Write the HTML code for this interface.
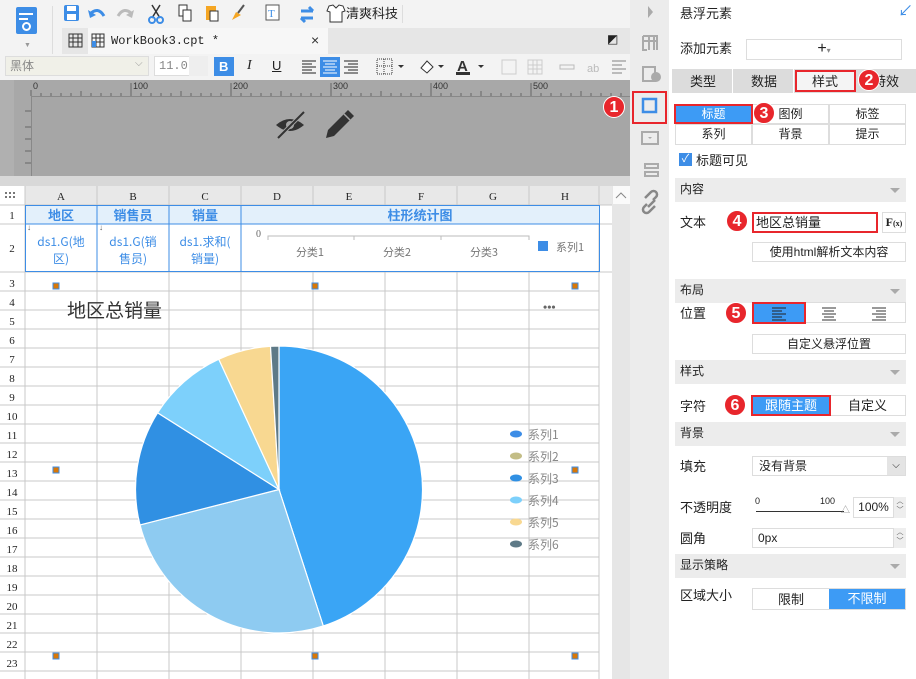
<!DOCTYPE html>
<html><head><meta charset="utf-8"><style>
*{margin:0;padding:0;box-sizing:border-box}
body{width:916px;height:679px;overflow:hidden;background:#fff;font-family:"Liberation Sans","Noto Sans CJK SC",sans-serif;font-size:12px;color:#222;position:relative}
.a{position:absolute}
.t{position:absolute;white-space:nowrap;line-height:1}
.badge{position:absolute;width:22px;height:22px;border-radius:50%;background:#e8262c;color:#fff;font-size:16px;font-weight:bold;text-align:center;line-height:22px;border:1px solid #fff}
.band{position:absolute;left:675px;width:231px;height:24px;background:#ececec}
.band span{position:absolute;left:5px;top:5px;font-size:12px;line-height:1}
.band i{position:absolute;right:6px;top:10px;border:5px solid transparent;border-top:5px solid #aaa}
.btn{position:absolute;background:#fff;border:1px solid #ddd;text-align:center;font-size:12px}
.lab{position:absolute;left:680px;font-size:12px;line-height:1;white-space:nowrap}
</style></head><body>

<!-- top toolbar -->
<div class="a" style="left:0;top:0;width:630px;height:28px;background:#f3f3f3"></div>
<div class="a" style="left:0;top:28px;width:62px;height:26px;background:#f3f3f3"></div>
<div class="a" style="left:16px;top:7px;width:21px;height:27px;background:#3d8de6;border-radius:2px"></div>
<div class="a" style="left:19px;top:13px;width:14px;height:2px;background:#fff"></div>
<div class="a" style="left:19px;top:18px;width:9px;height:2px;background:#fff"></div>
<div class="a" style="left:22px;top:22px;width:9px;height:9px;border:2px solid #fff;border-radius:50%"></div>
<div class="t" style="left:24px;top:42px;font-size:7px;color:#999">▼</div>
<div class="a" style="left:52px;top:6px;width:1px;height:50px;background:#ddd"></div>
<svg class="a" style="left:60px;top:2px" width="360" height="24">
<rect x="4" y="3" width="15" height="16" rx="2" fill="#3d8de6"/><rect x="7" y="4" width="9" height="5" fill="#fff"/><rect x="7" y="12" width="9" height="6" fill="#fff"/>
<path d="M30 12 q8 -8 14 2" stroke="#3d8de6" stroke-width="3" fill="none"/><path d="M28 8 l2 8 l6 -3z" fill="#3d8de6"/>
<path d="M72 12 q-8 -8 -14 2" stroke="#bbb" stroke-width="3" fill="none"/><path d="M74 8 l-2 8 l-6 -3z" fill="#bbb"/>
<path d="M92 3 l8 13 M100 3 l-8 13" stroke="#333" stroke-width="1.5"/><circle cx="92" cy="18" r="3" fill="none" stroke="#3d8de6" stroke-width="2"/><circle cx="100" cy="18" r="3" fill="none" stroke="#3d8de6" stroke-width="2"/>
<rect x="119" y="3" width="8" height="11" fill="#fff" stroke="#333"/><rect x="123" y="8" width="8" height="11" fill="#fff" stroke="#333"/>
<rect x="146" y="4" width="10" height="14" fill="#f5a623"/><rect x="150" y="9" width="8" height="10" fill="#fff" stroke="#333"/>
<path d="M172 18 l4 -8 l5 3 z" fill="#f5a623"/><path d="M178 11 l6 -8" stroke="#555" stroke-width="2"/>
<rect x="206" y="3" width="13" height="15" fill="#fff" stroke="#555"/><text x="208" y="15" font-size="11" fill="#3d8de6" font-family="Liberation Serif">T</text>
<path d="M241 9 h12 M249 5 l4 4 M253 16 h-12 M245 20 l-4 -4" stroke="#3d8de6" stroke-width="3" fill="none"/>
<path d="M269 4 l4 -1 l3 3 l3 -3 l4 1 l2 5 l-3 1 v10 h-12 v-10 l-3 -1z" fill="#fff" stroke="#333"/>
</svg>
<div class="t" style="left:346px;top:7px;font-size:13px">清爽科技</div>
<div class="a" style="left:402px;top:5px;width:1px;height:18px;background:#ddd"></div>
<!-- tab row -->
<div class="a" style="left:62px;top:28px;width:568px;height:26px;background:#e6e6e6"></div>
<div class="a" style="left:88px;top:28px;width:240px;height:26px;background:#f7f7f7"></div>
<svg class="a" style="left:68px;top:32px" width="40" height="18"><path d="M1 2h13v13H1zM1 6h13M1 10h13M5 2v13M10 2v13" stroke="#333" fill="none"/><path d="M24 2h12v13H24zM24 6h12M24 10h12M28 2v13M32 2v13" stroke="#333" fill="none"/><rect x="24" y="9" width="4" height="6" fill="#3d8de6"/></svg>
<div class="t" style="left:111px;top:35px;font-family:'Liberation Mono',monospace;font-size:12px">WorkBook3.cpt *</div>
<div class="t" style="left:311px;top:33px;font-size:14px;color:#333">×</div>
<div class="t" style="left:607px;top:33px;font-size:12px">◩</div>
<!-- format toolbar -->
<div class="a" style="left:0;top:54px;width:630px;height:26px;background:#f3f3f3"></div>
<div class="a" style="left:5px;top:56px;width:144px;height:20px;background:#f0f0e8;border:1px solid #ddd"></div>
<div class="t" style="left:10px;top:60px;color:#888">黑体</div>
<div class="t" style="left:135px;top:59px;color:#999;font-size:10px">⌵</div>
<div class="a" style="left:154px;top:56px;width:54px;height:20px;background:#fff;border:1px solid #ddd"></div>
<div class="t" style="left:159px;top:60px;color:#888;font-family:'Liberation Mono'">11.0</div>
<div class="a" style="left:189px;top:56px;width:19px;height:20px;background:#eee"></div>
<div class="a" style="left:214px;top:57px;width:20px;height:19px;background:#3d8de6"></div>
<div class="t" style="left:219px;top:60px;color:#fff;font-weight:bold;font-size:13px">B</div>
<div class="t" style="left:247px;top:59px;font-style:italic;font-family:'Liberation Serif';font-size:14px">I</div>
<div class="t" style="left:272px;top:59px;text-decoration:underline;font-size:13px">U</div>
<svg class="a" style="left:296px;top:56px" width="334" height="22">
<path d="M6 5h14M6 8h10M6 11h14M6 14h10M6 17h14" stroke="#222"/>
<rect x="24" y="1" width="20" height="20" fill="#3d8de6"/><path d="M27 5h14M29 8h10M27 11h14M29 14h10M27 17h14" stroke="#fff"/>
<path d="M48 5h14M52 8h10M48 11h14M52 14h10M48 17h14" stroke="#222"/>
<rect x="81" y="3" width="15" height="15" fill="none" stroke="#333" stroke-dasharray="1 1"/><path d="M81 10h15M88 3v15" stroke="#333" stroke-dasharray="1 1"/><path d="M102 9l3 3 3 -3z" fill="#333"/>
<path d="M125 12l6 -7 6 6 -6 6z" fill="#fff" stroke="#333"/><path d="M142 9l3 3 3 -3z" fill="#333"/>
<text x="161" y="15" font-size="15" font-weight="bold" fill="#333" font-family="Liberation Sans">A</text><rect x="160" y="16" width="14" height="3" fill="#333"/><path d="M182 9l3 3 3 -3z" fill="#333"/>
<rect x="206" y="4" width="14" height="14" fill="none" stroke="#ccc"/><rect x="232" y="4" width="14" height="14" fill="none" stroke="#ccc"/><path d="M232 9h14M232 13h14M237 4v14M241 4v14" stroke="#ccc"/>
<rect x="264" y="9" width="14" height="4" fill="none" stroke="#bbb"/><text x="291" y="16" font-size="11" fill="#bbb">ab</text>
<path d="M316 5h14M316 9h10M316 13h14M316 17h10" stroke="#bbb" stroke-width="2"/>
</svg>
<!-- ruler area -->
<div class="a" style="left:0;top:80px;width:630px;height:96px;background:#b0b0b0"></div>
<div class="a" style="left:14px;top:80px;width:616px;height:16px;background:#a8a8a8"></div>
<div class="a" style="left:14px;top:96px;width:17px;height:80px;background:#a8a8a8"></div>
<div class="a" style="left:31px;top:96px;width:599px;height:80px;background:#a6a6a6;border-top:1px solid #888;border-left:1px solid #888"></div>
<svg class="a" style="left:0;top:80px" width="630" height="96">
<g stroke="#666"><path d="M31 10v6M41 13v3M51 13v3M61 13v3M71 13v3M81 11v5M91 13v3M101 13v3M111 13v3M121 13v3M131 3v13M141 13v3M151 13v3M161 13v3M171 13v3M181 11v5M191 13v3M201 13v3M211 13v3M221 13v3M231 3v13M241 13v3M251 13v3M261 13v3M271 13v3M281 11v5M291 13v3M301 13v3M311 13v3M321 13v3M331 3v13M341 13v3M351 13v3M361 13v3M371 13v3M381 11v5M391 13v3M401 13v3M411 13v3M421 13v3M431 3v13M441 13v3M451 13v3M461 13v3M471 13v3M481 11v5M491 13v3M501 13v3M511 13v3M521 13v3M531 3v13M541 13v3M551 13v3M561 13v3M571 13v3M581 11v5M591 13v3M601 13v3M611 13v3M621 13v3"/>
<path d="M25 31h6M25 47h6M25 59h6M25 71h6M25 83h6"/></g>
<g font-size="9" fill="#333" font-family="Liberation Sans"><text x="33" y="9">0</text><text x="133" y="9">100</text><text x="233" y="9">200</text><text x="333" y="9">300</text><text x="433" y="9">400</text><text x="533" y="9">500</text></g>
<path d="M276 45 q14 -12 28 0 q-14 12 -28 0z" fill="#333"/><circle cx="290" cy="45" r="4" fill="#a6a6a6"/><path d="M278 58 L304 32" stroke="#a6a6a6" stroke-width="4"/><path d="M278 58 L304 32" stroke="#333" stroke-width="2"/>
<path d="M326 58 l2 -8 l20 -20 l6 6 l-20 20z" fill="#333"/><path d="M344 34 l6 6" stroke="#a6a6a6" stroke-width="1.5"/>
</svg>
<div class="a" style="left:0;top:176px;width:630px;height:10px;background:#d8d8d8"></div>
<div class="badge" style="left:603px;top:96px">1</div>

<!-- grid -->
<svg class="a" style="left:0;top:186px" width="630" height="493" font-family="Liberation Serif,Noto Sans CJK SC" >
<rect x="0" y="0" width="630" height="493" fill="#fff"/>
<rect x="0" y="0" width="612" height="19" fill="#e8e8e8"/>
<rect x="0" y="0" width="25" height="493" fill="#fff"/>
<rect x="612" y="0" width="18" height="493" fill="#e6e6e6"/><rect x="613" y="0" width="17" height="18" fill="#fafafa"/><path d="M616 12l5 -5 5 5" stroke="#888" fill="none"/>
<g fill="#777"><rect x="5" y="6" width="2" height="2"/><rect x="9" y="6" width="2" height="2"/><rect x="13" y="6" width="2" height="2"/><rect x="5" y="10" width="2" height="2"/><rect x="9" y="10" width="2" height="2"/><rect x="13" y="10" width="2" height="2"/></g>
<g stroke="#c8c8c8">
<path d="M25 0v493M97 0v493M169 0v493M241 0v493M313 0v19M313 86v407M385 0v19M385 86v407M457 0v19M457 86v407M529 0v19M529 86v407M599 0v493"/>
<path d="M0 19h612M0 38h612M0 86h612M0 105h599M0 124h599M0 143h599M0 162h599M0 181h599M0 200h599M0 219h599M0 238h599M0 257h599M0 276h599M0 295h599M0 314h599M0 333h599M0 352h599M0 371h599M0 390h599M0 409h599M0 428h599M0 447h599M0 466h599M0 485h599"/>
</g>
<rect x="26" y="20" width="573" height="18" fill="#e3f0fb"/>
<g stroke="#3d8de6" fill="none"><rect x="25.5" y="19.5" width="574" height="66"/><path d="M25 38h574M97 19v67M169 19v67M241 19v67"/></g>
<g font-size="11" fill="#222" text-anchor="middle"><text x="61" y="14">A</text><text x="133" y="14">B</text><text x="205" y="14">C</text><text x="277" y="14">D</text><text x="349" y="14">E</text><text x="421" y="14">F</text><text x="493" y="14">G</text><text x="565" y="14">H</text></g>
<g font-size="11" fill="#222" text-anchor="middle" font-family="Liberation Serif"><text x="12" y="33">1</text><text x="12" y="66">2</text><text x="12" y="101">3</text><text x="12" y="120">4</text><text x="12" y="139">5</text><text x="12" y="158">6</text><text x="12" y="177">7</text><text x="12" y="196">8</text><text x="12" y="215">9</text><text x="12" y="234">10</text><text x="12" y="253">11</text><text x="12" y="272">12</text><text x="12" y="291">13</text><text x="12" y="310">14</text><text x="12" y="329">15</text><text x="12" y="348">16</text><text x="12" y="367">17</text><text x="12" y="386">18</text><text x="12" y="405">19</text><text x="12" y="424">20</text><text x="12" y="443">21</text><text x="12" y="462">22</text><text x="12" y="481">23</text></g>
<g font-size="13" font-weight="bold" fill="#3d8de6" text-anchor="middle" font-family="Noto Sans CJK SC"><text x="61" y="34">地区</text><text x="133" y="34">销售员</text><text x="205" y="34">销量</text><text x="420" y="34">柱形统计图</text></g>
<g font-size="12" fill="#3d8de6" text-anchor="middle" font-family="Noto Sans CJK SC"><text x="61" y="60">ds1.G(地</text><text x="61" y="77">区)</text><text x="133" y="60">ds1.G(销</text><text x="133" y="77">售员)</text><text x="205" y="60">ds1.求和(</text><text x="205" y="77">销量)</text></g>
<text x="27" y="44" font-size="8" fill="#555">↓</text><text x="99" y="44" font-size="8" fill="#555">↓</text>
<text x="256" y="51" font-size="10" fill="#666">0</text>
<path d="M268 54v-4h261v4M354 50v4M441 50v4" stroke="#bbb" fill="none"/>
<g font-size="11" fill="#777" text-anchor="middle" font-family="Noto Sans CJK SC"><text x="310" y="70">分类1</text><text x="397" y="70">分类2</text><text x="484" y="70">分类3</text></g>
<rect x="538" y="55" width="10" height="10" fill="#3d8de6"/><text x="556" y="65" font-size="11" fill="#777" font-family="Noto Sans CJK SC">系列1</text>
<g fill="#d97706" stroke="#3d8de6" stroke-width="1"><rect x="53" y="97" width="6" height="6"/><rect x="312" y="97" width="6" height="6"/><rect x="572" y="97" width="6" height="6"/><rect x="53" y="281" width="6" height="6"/><rect x="572" y="281" width="6" height="6"/><rect x="53" y="467" width="6" height="6"/><rect x="312" y="467" width="6" height="6"/><rect x="572" y="467" width="6" height="6"/></g>
<text x="67" y="131" font-size="19" fill="#333" font-family="Noto Sans CJK SC">地区总销量</text>
<text x="543" y="125" font-size="12" fill="#666" font-weight="bold">•••</text>
<g stroke="#fff" stroke-width="1.2">
<path d="M279 303.5 L279 160 A143.5 143.5 0 0 1 323.3 440 Z" fill="#3aa5f5"/>
<path d="M279 303.5 L323.3 440 A143.5 143.5 0 0 1 140 338.9 Z" fill="#8ecbf1"/>
<path d="M279 303.5 L140 338.9 A143.5 143.5 0 0 1 157.6 226.8 Z" fill="#3090e3"/>
<path d="M279 303.5 L157.6 226.8 A143.5 143.5 0 0 1 218.8 173.2 Z" fill="#7dd0fb"/>
<path d="M279 303.5 L218.8 173.2 A143.5 143.5 0 0 1 270.5 160.3 Z" fill="#f8d891"/>
<path d="M279 303.5 L270.5 160.3 A143.5 143.5 0 0 1 279 160 Z" fill="#5e7a87"/>
</g>
<g font-size="12" fill="#888" font-family="Noto Sans CJK SC">
<ellipse cx="516" cy="248" rx="6" ry="3.5" fill="#3d8de6"/><text x="528" y="253">系列1</text>
<ellipse cx="516" cy="270" rx="6" ry="3.5" fill="#c3bd86"/><text x="528" y="275">系列2</text>
<ellipse cx="516" cy="292" rx="6" ry="3.5" fill="#3090e3"/><text x="528" y="297">系列3</text>
<ellipse cx="516" cy="314" rx="6" ry="3.5" fill="#7dd0fb"/><text x="528" y="319">系列4</text>
<ellipse cx="516" cy="336" rx="6" ry="3.5" fill="#f8d891"/><text x="528" y="341">系列5</text>
<ellipse cx="516" cy="358" rx="6" ry="3.5" fill="#5e7a87"/><text x="528" y="363">系列6</text>
</g>
</svg>

<!-- side icon strip -->
<div class="a" style="left:630px;top:0;width:39px;height:679px;background:#ececec"></div>
<svg class="a" style="left:630px;top:0" width="39" height="220">
<path d="M18 6l5 6-5 6z" fill="#aaa"/>
<path d="M13 36h14v14M13 36v14h4M13 41h14M19 36v14M24 36v14" stroke="#aaa" stroke-width="2" fill="none"/>
<rect x="13" y="67" width="12" height="14" fill="none" stroke="#aaa" stroke-width="2"/><circle cx="26" cy="77" r="5" fill="#aaa"/>
<rect x="3" y="92" width="33" height="31" fill="none" stroke="#e8262c" stroke-width="2"/>
<rect x="13" y="99" width="13" height="13" fill="none" stroke="#3d8de6" stroke-width="2.5"/>
<rect x="12" y="132" width="16" height="12" fill="none" stroke="#aaa" stroke-width="2"/><path d="M18 137l2 2 2 -2z" fill="#aaa"/>
<rect x="15" y="164" width="13" height="4" fill="none" stroke="#aaa" stroke-width="2"/><rect x="15" y="172" width="13" height="4" fill="none" stroke="#aaa" stroke-width="2"/>
<path d="M15 198l6 -6a3 3 0 0 1 5 5l-3 3M25 206l-6 6a3 3 0 0 1 -5 -5l3 -3M18 207l7 -7" stroke="#888" stroke-width="2.5" fill="none"/>
</svg>

<!-- right panel -->
<div class="a" style="left:669px;top:0;width:247px;height:679px;background:#fff"></div>
<div class="t" style="left:680px;top:7px;font-size:13px">悬浮元素</div>
<div class="t" style="left:898px;top:4px;font-size:15px;color:#3d8de6">↙</div>
<div class="lab" style="top:42px;font-size:13px">添加元素</div>
<div class="btn" style="left:746px;top:39px;width:156px;height:21px;font-size:16px;line-height:18px">+<span style="font-size:8px;color:#888">▾</span></div>
<div class="a" style="left:672px;top:69px;width:244px;height:24px;background:#dcdcdc"></div>
<div class="a" style="left:732px;top:69px;width:1px;height:24px;background:#fff"></div>
<div class="a" style="left:793px;top:69px;width:1px;height:24px;background:#fff"></div>
<div class="t" style="left:690px;top:75px;font-size:13px">类型</div>
<div class="t" style="left:751px;top:75px;font-size:13px">数据</div>
<div class="a" style="left:795px;top:70px;width:61px;height:22px;background:#f4f4f4;border:2px solid #e8262c"></div>
<div class="t" style="left:812px;top:75px;font-size:13px">样式</div>
<div class="t" style="left:873px;top:75px;font-size:13px">特效</div>
<div class="badge" style="left:858px;top:69px">2</div>
<div class="btn" style="left:752px;top:104px;width:77px;height:20px;line-height:18px">图例</div>
<div class="btn" style="left:829px;top:104px;width:77px;height:20px;line-height:18px">标签</div>
<div class="btn" style="left:675px;top:124px;width:77px;height:21px;line-height:19px">系列</div>
<div class="btn" style="left:752px;top:124px;width:77px;height:21px;line-height:19px">背景</div>
<div class="btn" style="left:829px;top:124px;width:77px;height:21px;line-height:19px">提示</div>
<div class="a" style="left:674px;top:104px;width:79px;height:20px;background:#3d9bf5;border:2px solid #e8262c;color:#fff;text-align:center;line-height:16px">标题</div>
<div class="badge" style="left:753px;top:102px">3</div>
<div class="a" style="left:679px;top:153px;width:13px;height:13px;background:#3d8de6;color:#fff;font-size:11px;line-height:13px;text-align:center">✓</div>
<div class="t" style="left:696px;top:154px;font-size:13px">标题可见</div>
<div class="band" style="top:178px"><span>内容</span><i></i></div>
<div class="lab" style="top:216px;font-size:13px">文本</div>
<div class="badge" style="left:726px;top:210px">4</div>
<div class="a" style="left:752px;top:212px;width:126px;height:21px;background:#fff;border:2px solid #e8262c"></div>
<div class="t" style="left:756px;top:216px;font-size:13px">地区总销量</div>
<div class="btn" style="left:882px;top:212px;width:24px;height:21px;font-family:'Liberation Serif';font-size:12px;line-height:19px;font-weight:bold">F<span style="font-size:8px">(x)</span></div>
<div class="btn" style="left:752px;top:242px;width:154px;height:20px;line-height:18px;font-size:12px">使用html解析文本内容</div>
<div class="band" style="top:279px"><span>布局</span><i></i></div>
<div class="lab" style="top:307px;font-size:13px">位置</div>
<div class="badge" style="left:725px;top:302px">5</div>
<div class="btn" style="left:752px;top:302px;width:154px;height:21px"></div>
<div class="a" style="left:752px;top:302px;width:54px;height:22px;background:#3d9bf5;border:2px solid #e8262c"></div>
<svg class="a" style="left:752px;top:302px" width="154" height="22"><path d="M20 6h14M20 9h10M20 12h14M20 15h10M20 18h14" stroke="#222"/><path d="M70 6h14M72 9h10M70 12h14M72 15h10M70 18h14" stroke="#333"/><path d="M120 6h14M124 9h10M120 12h14M124 15h10M120 18h14" stroke="#333"/></svg>
<div class="btn" style="left:752px;top:334px;width:154px;height:20px;line-height:18px;font-size:12px">自定义悬浮位置</div>
<div class="band" style="top:360px"><span>样式</span><i></i></div>
<div class="lab" style="top:400px;font-size:13px">字符</div>
<div class="badge" style="left:724px;top:394px">6</div>
<div class="btn" style="left:829px;top:395px;width:77px;height:21px;line-height:19px;font-size:13px">自定义</div>
<div class="a" style="left:751px;top:395px;width:80px;height:21px;background:#3d9bf5;border:2px solid #e8262c;color:#fff;text-align:center;line-height:17px;font-size:13px">跟随主题</div>
<div class="band" style="top:422px"><span>背景</span><i></i></div>
<div class="lab" style="top:460px;font-size:13px">填充</div>
<div class="btn" style="left:752px;top:456px;width:154px;height:20px;text-align:left;padding-left:6px;line-height:18px">没有背景</div>
<div class="a" style="left:887px;top:457px;width:18px;height:18px;background:#e4e4e4;text-align:center;font-size:10px;line-height:18px">⌵</div>
<div class="lab" style="top:501px;font-size:13px">不透明度</div>
<div class="t" style="left:755px;top:497px;font-size:9px">0</div>
<div class="t" style="left:820px;top:497px;font-size:9px">100</div>
<div class="a" style="left:756px;top:511px;width:88px;height:1px;background:#333"></div>
<div class="t" style="left:841px;top:506px;font-size:9px;color:#888">△</div>
<div class="btn" style="left:853px;top:497px;width:41px;height:21px;line-height:19px;font-size:12px">100%</div>
<div class="a" style="left:894px;top:497px;width:12px;height:21px;background:#eee;font-size:7px;color:#555;text-align:center;line-height:9px">︿<br>﹀</div>
<div class="lab" style="top:532px;font-size:13px">圆角</div>
<div class="btn" style="left:752px;top:528px;width:142px;height:20px;text-align:left;padding-left:5px;line-height:18px">0px</div>
<div class="a" style="left:894px;top:528px;width:12px;height:20px;background:#eee;font-size:7px;color:#555;text-align:center;line-height:9px">︿<br>﹀</div>
<div class="band" style="top:554px"><span>显示策略</span><i></i></div>
<div class="lab" style="top:589px;font-size:13px">区域大小</div>
<div class="btn" style="left:752px;top:588px;width:154px;height:22px"></div>
<div class="t" style="left:778px;top:593px;font-size:13px">限制</div>
<div class="a" style="left:829px;top:589px;width:76px;height:20px;background:#3d9bf5;color:#fff;text-align:center;line-height:20px;font-size:13px">不限制</div>
</body></html>
